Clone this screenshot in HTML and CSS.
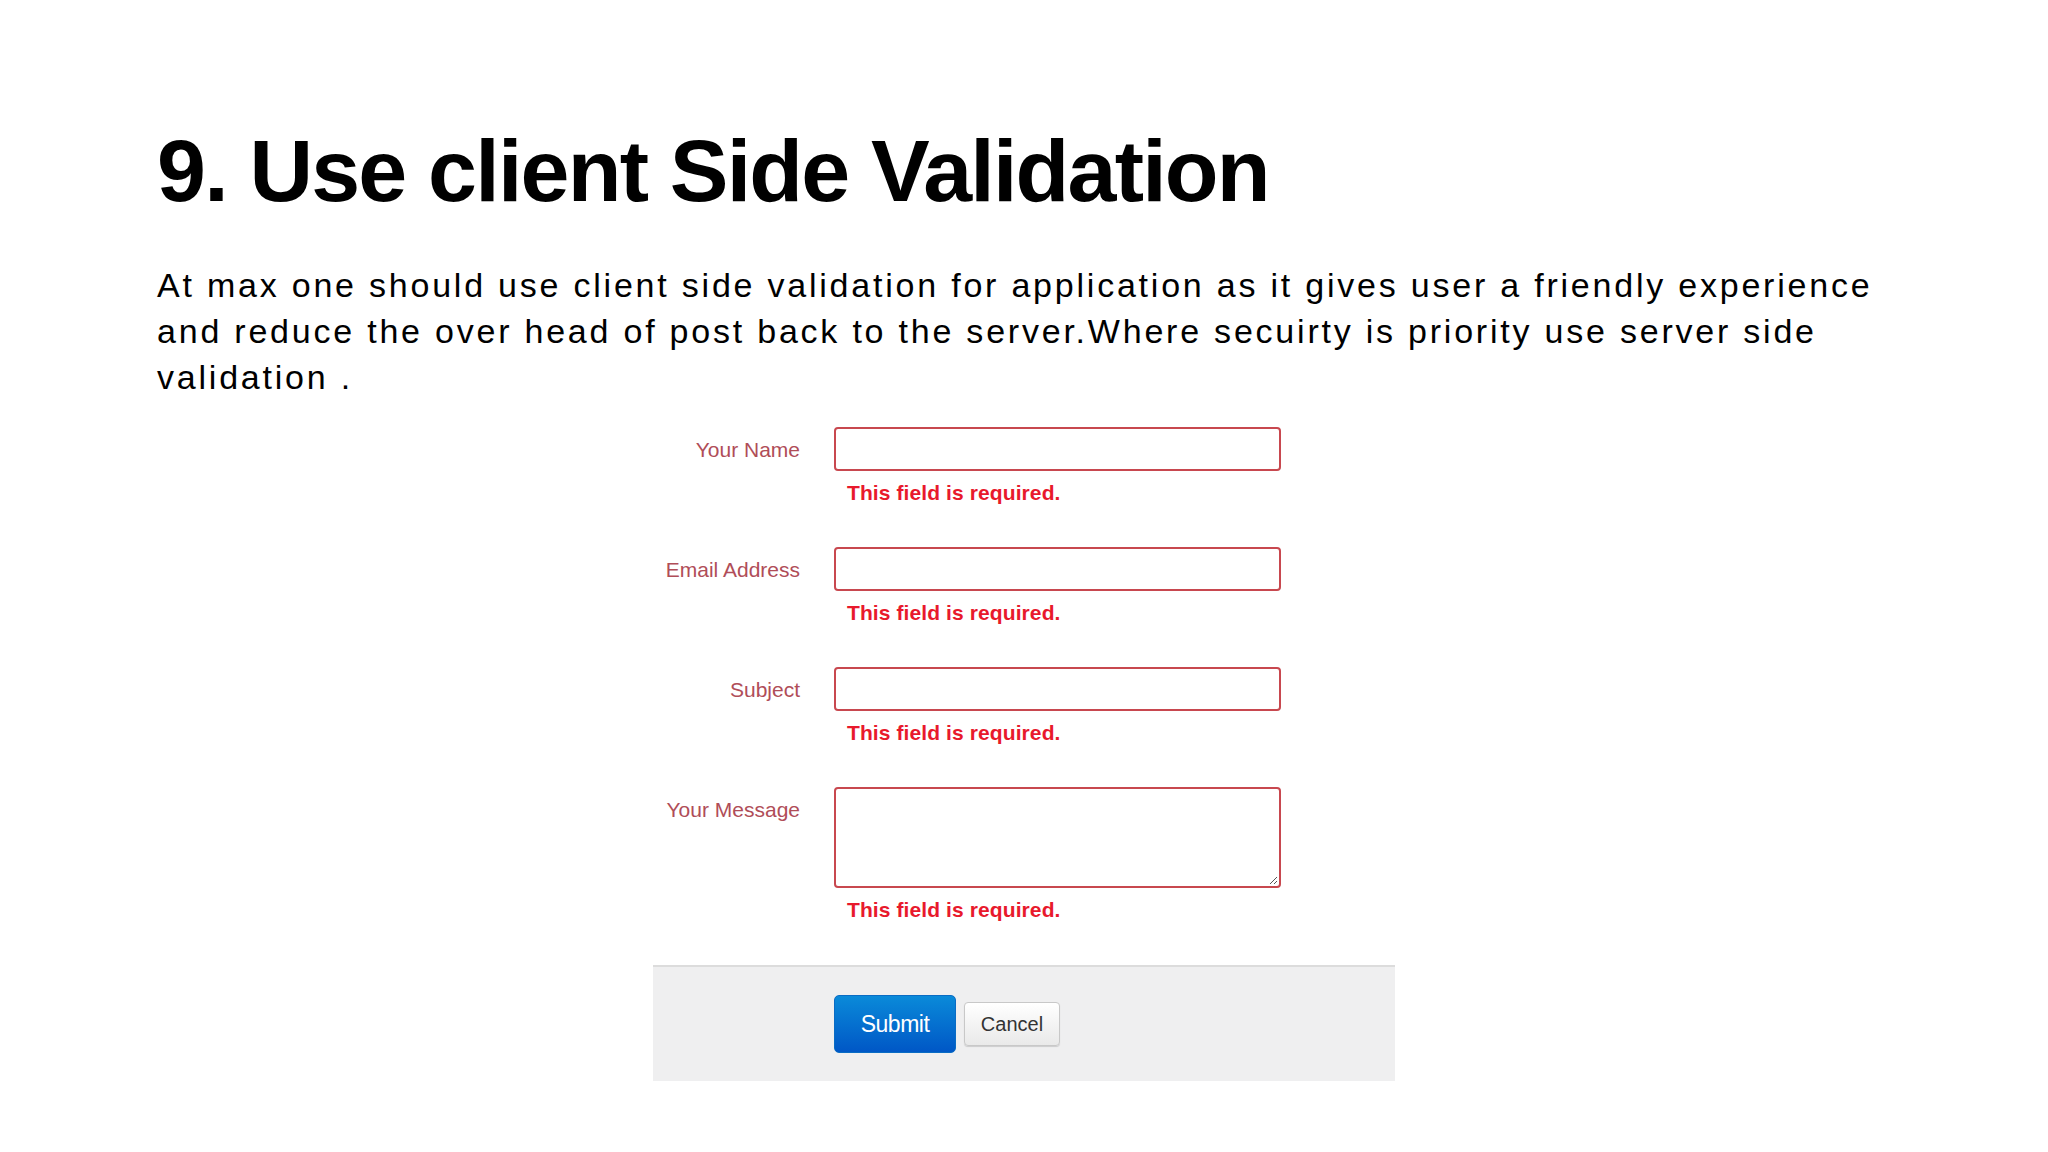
FILE: index.html
```html
<!DOCTYPE html>
<html>
<head>
<meta charset="utf-8">
<link rel="stylesheet" href="styles.css">
</head>
<body>
<div class="slide">
  <h1 class="title">9. Use client Side Validation</h1>
  <p class="body-text">At max one should use client side validation for application as it gives user a friendly experience<br>and reduce the over head of post back to the server.Where secuirty is priority use server side<br>validation .</p>
  <form class="form">
    <div class="row">
      <label class="label">Your Name</label>
      <div class="field">
        <div class="input"></div>
        <div class="error">This field is required.</div>
      </div>
    </div>
    <div class="row">
      <label class="label">Email Address</label>
      <div class="field">
        <div class="input"></div>
        <div class="error">This field is required.</div>
      </div>
    </div>
    <div class="row">
      <label class="label">Subject</label>
      <div class="field">
        <div class="input"></div>
        <div class="error">This field is required.</div>
      </div>
    </div>
    <div class="row last">
      <label class="label">Your Message</label>
      <div class="field">
        <div class="input textarea">
          <svg class="grip" width="10" height="10" viewBox="0 0 10 10"><path d="M9 2 L2 9 M9 6 L6 9" stroke="#555" stroke-width="1" fill="none"/></svg>
        </div>
        <div class="error">This field is required.</div>
      </div>
    </div>
    <div class="actions">
      <button type="button" class="btn-submit">Submit</button>
      <button type="button" class="btn-cancel">Cancel</button>
    </div>
  </form>
</div>
</body>
</html>
```
FILE: styles.css
```css
html, body {
  margin: 0;
  padding: 0;
  background: #ffffff;
}
.slide {
  width: 2048px;
  height: 1152px;
  box-sizing: border-box;
  padding-left: 157px;
  padding-top: 127px;
  font-family: "Liberation Sans", Arial, sans-serif;
  color: #000;
}
.title {
  margin: 0;
  font-size: 88px;
  line-height: 88px;
  font-weight: bold;
  letter-spacing: -1.8px;
}
.body-text {
  margin: 47px 0 0 0;
  font-size: 34px;
  line-height: 46px;
  letter-spacing: 2.78px;
  white-space: nowrap;
}
.form {
  margin: 27px 0 0 496px;
  width: 742px;
  font-family: "Liberation Sans", Arial, sans-serif;
}
.row {
  display: flex;
  gap: 34px;
  margin-bottom: 42px;
}
.row.last {
  margin-bottom: 43px;
}
.label {
  width: 147px;
  text-align: right;
  font-size: 21px;
  line-height: 24px;
  padding-top: 11px;
  color: #b04d58;
  white-space: nowrap;
}
.field {
  display: flex;
  flex-direction: column;
}
.input {
  width: 447px;
  height: 44px;
  box-sizing: border-box;
  border: 2px solid #c8484f;
  border-radius: 4px;
  background: #fff;
  position: relative;
}
.textarea {
  height: 101px;
}
.grip {
  position: absolute;
  right: 1px;
  bottom: 1px;
}
.error {
  margin-top: 10px;
  padding-left: 13px;
  font-size: 21px;
  line-height: 24px;
  font-weight: bold;
  letter-spacing: 0.1px;
  color: #e8192c;
  white-space: nowrap;
}
.actions {
  height: 116px;
  box-sizing: border-box;
  border-top: 2px solid #dcdcdc;
  background: #efeff0;
  display: flex;
  align-items: center;
  gap: 8px;
  padding-left: 181px;
}
.btn-submit {
  width: 122px;
  height: 58px;
  border: 1px solid #0a6cc4;
  border-radius: 5px;
  background: linear-gradient(#0a8ad9, #0057c6);
  color: #fff;
  font-family: "Liberation Sans", Arial, sans-serif;
  font-size: 23px;
  letter-spacing: -0.5px;
  padding: 0;
}
.btn-cancel {
  width: 96px;
  height: 44px;
  border: 1px solid #c8c8c8;
  border-radius: 4px;
  background: linear-gradient(#ffffff, #e9e9e9);
  box-shadow: 0 1px 1px rgba(0,0,0,0.15);
  color: #333;
  font-family: "Liberation Sans", Arial, sans-serif;
  font-size: 20px;
  padding: 0;
}
```
